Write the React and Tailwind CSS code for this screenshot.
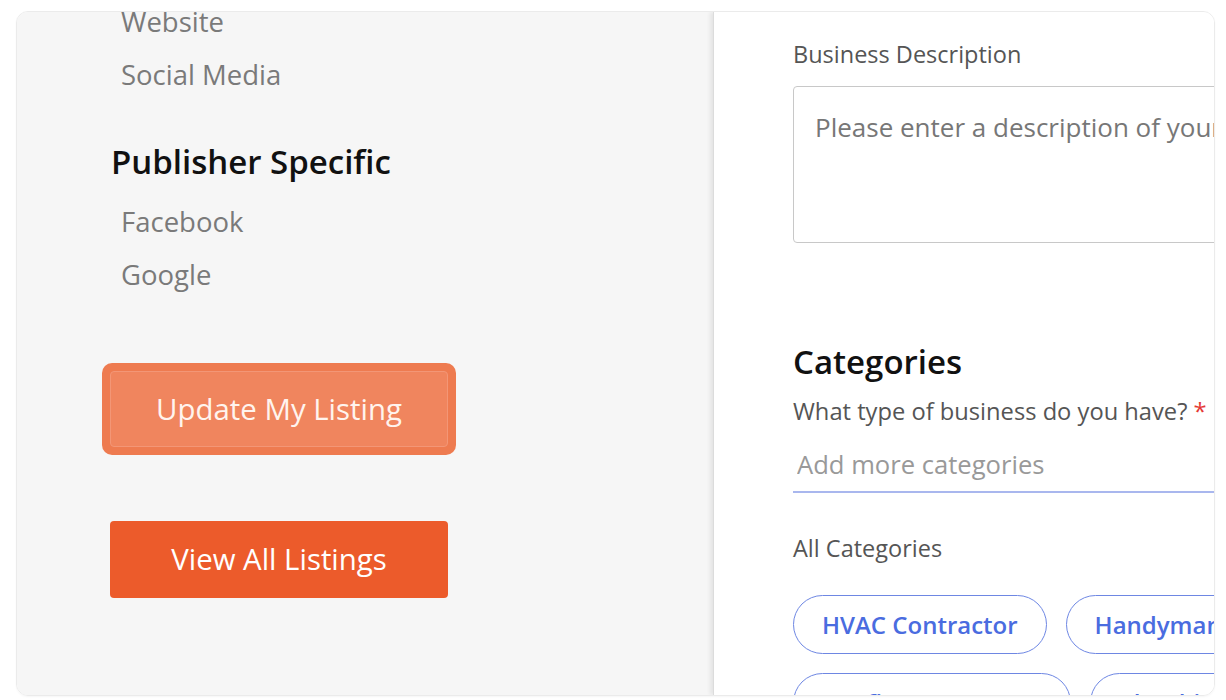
import React from 'react';

const linkItems = ['Website', 'Social Media'];
const publisherItems = ['Facebook', 'Google'];

const categoryRows = [
  ['HVAC Contractor', 'Handyman Services'],
  ['Roofing Contractor', 'Plumbing Services'],
];

const Sidebar = () => (
  <div className="w-[696px] shrink-0 bg-[#f6f6f6] pl-[93px]">
    <ul className="mt-[-17px] pl-[11px] text-[27.5px] leading-[53px] text-[#7a7a7a]">
      {linkItems.map(item => (
        <li key={item}>{item}</li>
      ))}
    </ul>

    <h2 className="mt-[39px] pl-[1px] text-[33px] leading-[44px] font-semibold text-[#111]">
      Publisher Specific
    </h2>
    <ul className="mt-[11px] pl-[11px] text-[27.5px] leading-[53px] text-[#7a7a7a]">
      {publisherItems.map(item => (
        <li key={item}>{item}</li>
      ))}
    </ul>

    {/* focused button keeps its ring */}
    <div className="mt-[62px] ml-[-8px] w-[354px] rounded-[10px] bg-[#ee7b50] p-[8px]">
      <button className="h-[76px] w-full rounded-[4px] border border-[#f39676] bg-[#f0855e] text-[29.4px] text-[#fff4ee]">
        Update My Listing
      </button>
    </div>

    <button className="mt-[66px] h-[77px] w-[338px] rounded-[4px] bg-[#ec5b2b] text-[29.4px] text-white">
      View All Listings
    </button>
  </div>
);

const CategoryPill = ({ label }) => (
  <span className="flex h-[59px] shrink-0 items-center rounded-full border border-[#6e87e3] px-[28px] pt-[1px] text-[24px] font-semibold whitespace-nowrap text-[#4a6ce0]">
    {label}
  </span>
);

const ListingForm = () => (
  <div className="relative flex-1 overflow-hidden border-l border-[#dcdcdc] bg-white pl-[79px] pt-[26px] shadow-[-3px_0_4px_rgba(0,0,0,0.07)]">
    <label className="block text-[23.5px] leading-[32px] text-[#555]">Business Description</label>
    <textarea
      className="mt-[16px] block h-[157px] w-[600px] resize-none rounded-[4px] border border-[#c8c8c8] px-[21px] pt-[22px] text-[26px] leading-[36px] text-[#333] outline-none placeholder:text-[#777]"
      placeholder="Please enter a description of your business"
    />

    <h2 className="mt-[97px] text-[33px] leading-[44px] font-semibold text-[#111]">Categories</h2>
    <p className="mt-[11px] text-[23.7px] leading-[32px] text-[#555]">
      What type of business do you have? <span className="text-[#e53935]">*</span>
    </p>
    <input
      className="mt-[12px] block h-[54px] w-[600px] border-b-2 border-[#a9b7ee] pl-[4px] pb-[2px] text-[25.6px] text-[#333] outline-none placeholder:text-[#999]"
      placeholder="Add more categories"
    />

    <p className="mt-[39px] text-[23.5px] leading-[32px] text-[#555]">All Categories</p>
    <div className="mt-[31px] flex flex-col gap-[19px]">
      {categoryRows.map((row, i) => (
        <div key={i} className="flex gap-[19px]">
          {row.map(label => (
            <CategoryPill key={label} label={label} />
          ))}
        </div>
      ))}
    </div>
  </div>
);

export default function App() {
  return (
    <div className="min-h-[700px] bg-white pt-[11px] pl-[16px] font-['Open_Sans',sans-serif]">
      <div className="flex h-[685px] w-[1199px] overflow-hidden rounded-[12px] border border-[#ebebeb] shadow-[0_1px_2px_rgba(0,0,0,0.04)]">
        <Sidebar />
        <ListingForm />
      </div>
    </div>
  );
}
